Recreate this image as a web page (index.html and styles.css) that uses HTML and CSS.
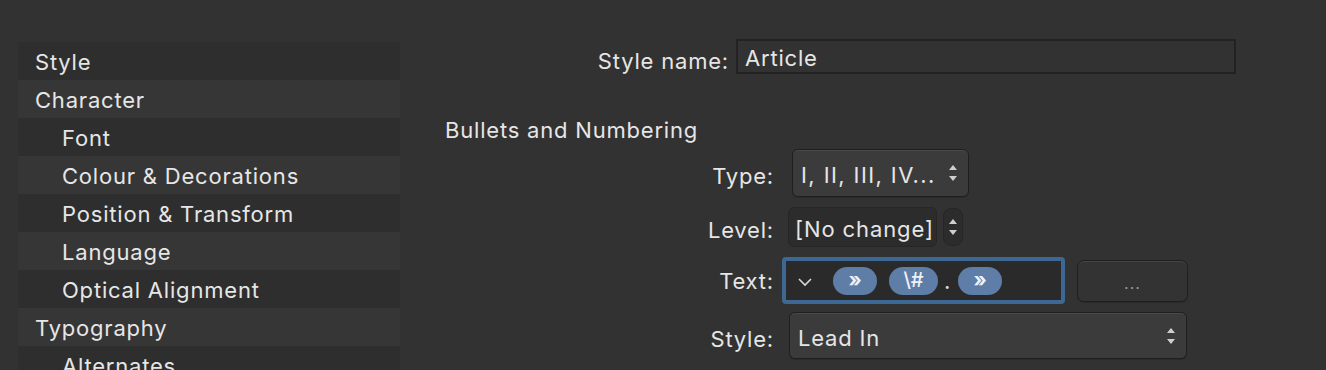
FILE: index.html
```html
<!DOCTYPE html>
<html>
<head>
<meta charset="utf-8">
<link rel="stylesheet" href="styles.css">
</head>
<body>
<div class="page">
  <nav class="sidebar">
    <div class="row">Style</div>
    <div class="row alt">Character</div>
    <div class="row sub">Font</div>
    <div class="row sub alt">Colour &amp; Decorations</div>
    <div class="row sub">Position &amp; Transform</div>
    <div class="row sub alt">Language</div>
    <div class="row sub">Optical Alignment</div>
    <div class="row alt">Typography</div>
    <div class="row sub">Alternates</div>
  </nav>
  <main class="panel">
    <div class="name-row">
      <label class="name-label">Style name:</label>
      <div class="name-input">Article</div>
    </div>
    <div class="section">Bullets and Numbering</div>
    <div class="form">
      <div class="frow r-type">
        <span class="flabel">Type:</span>
        <div class="popup type-popup">
          <span>I, II, III, IV...</span>
          <svg class="arrows" width="10" height="18" viewBox="0 0 10 18"><path d="M1 6 L5 1 L9 6 Z M1 12 L5 17 L9 12 Z" fill="#cfcfcf"/></svg>
        </div>
      </div>
      <div class="frow r-level">
        <span class="flabel">Level:</span>
        <div class="level-field">[No change]</div>
        <div class="stepper">
          <svg width="10" height="20" viewBox="0 0 10 20"><path d="M1 7 L5 2 L9 7 Z M1 13 L5 18 L9 13 Z" fill="#cfcfcf"/></svg>
        </div>
      </div>
      <div class="frow r-text">
        <span class="flabel">Text:</span>
        <div class="token-field">
          <svg class="chev" width="16" height="10" viewBox="0 0 16 10"><path d="M2 2 L8 8 L14 2" fill="none" stroke="#d8d8d8" stroke-width="1.6"/></svg>
          <span class="pill">»</span>
          <span class="pill wide">\#</span>
          <span class="dot">.</span>
          <span class="pill">»</span>
        </div>
        <div class="btn">...</div>
      </div>
      <div class="frow r-style">
        <span class="flabel">Style:</span>
        <div class="popup style-popup">
          <span>Lead In</span>
          <svg class="arrows" width="10" height="18" viewBox="0 0 10 18"><path d="M1 6 L5 1 L9 6 Z M1 12 L5 17 L9 12 Z" fill="#cfcfcf"/></svg>
        </div>
      </div>
    </div>
  </main>
</div>
</body>
</html>
```

FILE: styles.css
```css
* { box-sizing: border-box; }
html, body {
  margin: 0;
  padding: 0;
  background: #323232;
  height: 370px;
  overflow: hidden;
}
body {
  font-family: Inter, "Noto Sans", "Liberation Sans", sans-serif;
  color: #e6e6e6;
  font-size: 22px;
  letter-spacing: 0.8px;
}
.page {
  display: flex;
  align-items: flex-start;
}
.sidebar {
  margin-left: 18px;
  margin-top: 42px;
  width: 382px;
  display: flex;
  flex-direction: column;
}
.row {
  height: 38px;
  display: flex;
  align-items: center;
  padding-left: 17px;
  padding-top: 2px;
  background: #2e2e2e;
  white-space: nowrap;
}
.row.alt { background: #363636; }
.row.sub { padding-left: 44px; }

.panel {
  flex: 1;
  padding-top: 38px;
  display: flex;
  flex-direction: column;
}
.name-row {
  display: flex;
  align-items: center;
}
.name-label {
  width: 329px;
  text-align: right;
  padding-top: 10px;
}
.name-input {
  margin-left: 7px;
  width: 500px;
  height: 35px;
  border: 2px solid #222222;
  background: #323232;
  padding-left: 7px;
  padding-top: 4px;
  line-height: 26px;
}
.section {
  margin-top: 43px;
  margin-left: 45px;
  line-height: 26px;
}
.form {
  margin-top: 6px;
  display: flex;
  flex-direction: column;
}
.frow {
  display: flex;
  align-items: center;
}
.flabel {
  width: 374px;
  text-align: right;
  flex: none;
}
.popup {
  border: 1px solid #1f1f1f;
  border-radius: 6px;
  background: #3b3b3b;
  box-shadow: inset 0 1px 0 #4a4a4a, 0 1px 0 #2a2a2a;
  display: flex;
  align-items: center;
  justify-content: space-between;
  padding: 0 10px 0 8px;
  white-space: nowrap;
}
.type-popup {
  margin-left: 18px;
  width: 177px;
  height: 48px;
}
.r-type .flabel { padding-top: 6px; }
.r-level { margin-top: 10px; }
.r-level .flabel { padding-top: 6px; }
.level-field {
  margin-left: 14px;
  width: 149px;
  height: 40px;
  border: 1px solid #262626;
  border-radius: 6px;
  background: #2c2c2c;
  display: flex;
  align-items: center;
  padding-left: 6px;
  padding-top: 3px;
  white-space: nowrap;
  overflow: hidden;
  letter-spacing: 0.9px;
}
.stepper {
  margin-left: 6px;
  width: 20px;
  height: 38px;
  border: 1px solid #262626;
  border-radius: 8px;
  background: #2c2c2c;
  display: flex;
  align-items: center;
  justify-content: center;
}
.r-text { margin-top: 10px; }
.token-field {
  margin-left: 8px;
  width: 283px;
  height: 47px;
  border: 4px solid #3d6893;
  border-radius: 4px;
  background: #2a2a2a;
  display: flex;
  align-items: center;
  padding-left: 11px;
}
.chev { margin-right: 20px; margin-top: 2px; }
.pill {
  width: 44px;
  height: 28px;
  border-radius: 14px;
  background: #5f7ea7;
  color: #eef2f8;
  font-weight: 700;
  font-size: 20px;
  letter-spacing: 0;
  display: flex;
  align-items: center;
  justify-content: center;
  margin-right: 12px;
  padding-bottom: 2px;
}
.pill.wide { width: 49px; margin-right: 6px; font-weight: 500; }
.dot { margin-right: 7px; color: #dcdcdc; }
.btn {
  margin-left: 12px;
  width: 111px;
  height: 42px;
  border: 1px solid #1f1f1f;
  border-radius: 7px;
  background: #333333;
  box-shadow: inset 0 1px 0 #454545, 0 1px 0 #2a2a2a;
  color: #9a9a9a;
  font-size: 16px;
  display: flex;
  align-items: flex-end;
  justify-content: center;
  padding-bottom: 8px;
  letter-spacing: 1px;
}
.r-style { margin-top: 8px; }
.r-style .flabel { padding-top: 6px; }
.style-popup {
  margin-left: 15px;
  width: 398px;
  height: 47px;
}
.style-popup span { padding-top: 4px; }
.type-popup span { padding-top: 4px; letter-spacing: 1.4px; }
```
